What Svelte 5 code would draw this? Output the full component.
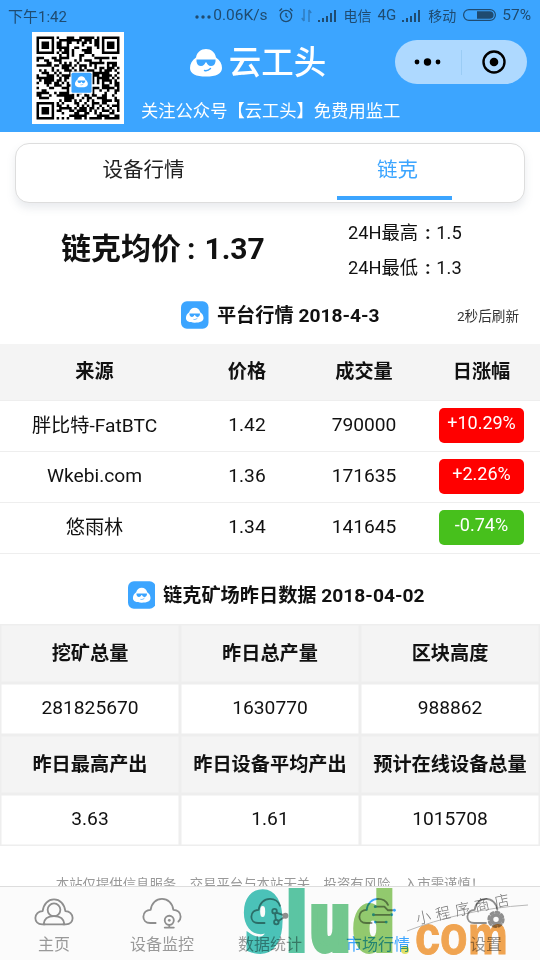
<script>
  const market = [
    { name: '胖比特-FatBTC', price: '1.42', volume: '790000', change: '+10.29%', up: true },
    { name: 'Wkebi.com', price: '1.36', volume: '171635', change: '+2.26%', up: true },
    { name: '悠雨林', price: '1.34', volume: '141645', change: '-0.74%', up: false }
  ];
  const stats = [
    { head: true, cells: ['挖矿总量', '昨日总产量', '区块高度'] },
    { head: false, cells: ['281825670', '1630770', '988862'] },
    { head: true, cells: ['昨日最高产出', '昨日设备平均产出', '预计在线设备总量'] },
    { head: false, cells: ['3.63', '1.61', '1015708'] }
  ];

  const N = 33;
  function finder(x, y) {
    return `M${x} ${y}h7v7h-7zM${x + 1} ${y + 1}v5h5v-5zM${x + 2} ${y + 2}h3v3h-3z`;
  }
  function makeQr() {
    let seed = 20180403;
    const rnd = () => ((seed = (seed * 1664525 + 1013904223) >>> 0) / 4294967296);
    let d = finder(0, 0) + finder(N - 7, 0) + finder(0, N - 7);
    for (let y = 0; y < N; y++) {
      for (let x = 0; x < N; x++) {
        const inTL = x < 8 && y < 8;
        const inTR = x >= N - 8 && y < 8;
        const inBL = x < 8 && y >= N - 8;
        if (inTL || inTR || inBL) continue;
        if (rnd() < 0.52) d += `M${x} ${y}h1v1h-1z`;
      }
    }
    return d;
  }
  const qr = makeQr();
</script>

{#snippet face(bg)}
  <path fill="#fff" d="M16 0C21 0 25 3 26 8.500C30 11 32 15 32 19C32 25 26 27.500 16 27.500C6 27.500 0 25 0 19C0 15 2 11 6 8.500C7 3 11 0 16 0Z" />
  <path fill={bg} d="M7 10.500H25.500V12.500C25 15.500 23.500 17 21 17C18.500 17 17 15 16.700 13.500H15.300C15 15 13.500 17 11 17C8.500 17 7 15.500 6.500 12.500V10.500Z" />
  <path fill="none" stroke={bg} stroke-width="1.400" stroke-linecap="round" d="M14.500 21.500C16.500 22 19 21 20.500 19.500" />
{/snippet}

{#snippet badge()}
  <svg class="badge" viewBox="0 0 28 28">
    <rect width="28" height="28" rx="6" fill="#3ca5ff" />
    <g transform="translate(5 6.500) scale(.56)">{@render face('#3ca5ff')}</g>
  </svg>
{/snippet}

<div class="page">
  <header class="top">
    <div class="status">
      <span class="time">下午1:42</span>
      <span class="status-right">
        <svg class="dots" viewBox="0 0 16 4"><circle cx="2" cy="2" r="1.700" /><circle cx="8" cy="2" r="1.700" /><circle cx="14" cy="2" r="1.700" /></svg>
        <span class="speed">0.06K/s</span>
        <svg class="alarm" viewBox="0 0 16 16"><circle cx="8" cy="9" r="5.600" /><path d="M8 6v3.200l2 1.300M1.500 4L4 1.500M14.500 4L12 1.500" /></svg>
        <svg class="arrows" viewBox="0 0 11 15"><path d="M3 1v12M3 13l-2.200-3M8 14V2M8 2l2.200 3" /></svg>
        <svg class="signal" viewBox="0 0 19 13"><path d="M0 11h2v2H0zM4 9h2v4H4zM8 7h2v6H8zM12 4h2v9h-2zM16 1h2v12h-2z" /></svg>
        <span class="carrier">电信</span>
        <span class="net">4G</span>
        <svg class="signal" viewBox="0 0 19 13"><path d="M0 11h2v2H0zM4 9h2v4H4zM8 7h2v6H8zM12 4h2v9h-2zM16 1h2v12h-2z" /></svg>
        <span class="carrier">移动</span>
        <svg class="battery" viewBox="0 0 33 12"><rect x=".6" y=".6" width="31.800" height="10.800" rx="5.400" /><path class="fill" d="M14 2.200h12.800a3.800 3.800 0 0 1 0 7.600H14z" /></svg>
        <span class="pct">57%</span>
      </span>
    </div>
    <div class="brand">
      <svg class="qr" viewBox="-1.800 -1.800 36.600 36.600">
        <rect x="-1.800" y="-1.800" width="36.600" height="36.600" fill="#fff" />
        <path d={qr} fill="#000" fill-rule="evenodd" />
        <rect x="13.500" y="14" width="8.800" height="8.800" fill="#fff" />
        <rect x="13.900" y="14.400" width="8" height="8" rx=".6" fill="#3ca5ff" />
        <g transform="translate(15.300 15.800) scale(.16)">{@render face('#3ca5ff')}</g>
      </svg>
      <div class="brand-main">
        <div class="title-row">
          <svg class="logo" viewBox="0 0 32 28">{@render face('#3ca5ff')}</svg>
          <span class="title">云工头</span>
        </div>
        <div class="sub">关注公众号【云工头】免费用监工</div>
      </div>
      <div class="capsule">
        <span class="cap-side">
          <svg class="cap-dots" viewBox="0 0 27 10"><circle cx="3" cy="5" r="2.400" /><circle cx="13.500" cy="5" r="3.700" /><circle cx="24" cy="5" r="2.400" /></svg>
        </span>
        <span class="cap-line"></span>
        <span class="cap-side">
          <svg class="cap-target" viewBox="0 0 24 24"><circle class="ring" cx="12" cy="12" r="10.500" /><circle cx="12" cy="12" r="4.300" /></svg>
        </span>
      </div>
    </div>
  </header>

  <main class="content">
    <div class="tabs">
      <div class="tab">设备行情</div>
      <div class="tab active">链克<i></i></div>
    </div>

    <div class="price-row">
      <div class="avg">链克均价<span class="colon">:</span>1.37</div>
      <div class="hilo">
        <div>24H最高<span class="colon">:</span>1.5</div>
        <div>24H最低<span class="colon">:</span>1.3</div>
      </div>
    </div>

    <div class="sec-one">
      <div class="sec-title">{@render badge()}<span>平台行情 2018-4-3</span></div>
      <span class="refresh">2秒后刷新</span>
    </div>

    <div class="market">
      <div class="m-row m-head">
        <span>来源</span><span>价格</span><span>成交量</span><span>日涨幅</span>
      </div>
      {#each market as r}
        <div class="m-row">
          <span>{r.name}</span><span>{r.price}</span><span>{r.volume}</span>
          <span><b class="chg" class:down={!r.up}>{r.change}</b></span>
        </div>
      {/each}
    </div>

    <div class="sec-two">
      <div class="sec-title">{@render badge()}<span>链克矿场昨日数据 2018-04-02</span></div>
    </div>

    <div class="stats">
      {#each stats as row}
        {#each row.cells as c}
          <div class="cell" class:head={row.head}>{c}</div>
        {/each}
      {/each}
    </div>

    <p class="note">本站仅提供信息服务，交易平台与本站无关，投资有风险，入市需谨慎！</p>
  </main>

  <nav class="nav">
    <div class="nav-item">
      <svg viewBox="0 0 44 34"><path d="M12 29.500H9C4 29.500 1.500 26 1.500 22.500C1.500 18 5 15 9.500 15C10.500 7 15.500 2 22 2C28.500 2 33.500 7 34.500 15C39 15 42.500 18 42.500 22.500C42.500 26 40 29.500 35 29.500H32" /><circle cx="22" cy="13.500" r="7" /><path d="M10.500 29.500C11 24 15 20.500 22 20.500C29 20.500 33 24 33.500 29.500Z" /></svg>
      <span>主页</span>
    </div>
    <div class="nav-item">
      <svg viewBox="0 0 44 34"><path d="M15 28H9C4 28 1.500 24.500 1.500 21C1.500 16.500 5 13.500 9.500 13.500C10.500 6 15.500 1.500 22 1.500C28.500 1.500 33.500 6 34.500 13.500C39 13.500 42.500 16.500 42.500 21C42.500 23 41.500 25 40 26.500" /><circle cx="30" cy="25" r="5" /><circle class="solid" cx="30" cy="25" r="1.500" /><path d="M30 30v2.500M25 33h10" /></svg>
      <span>设备监控</span>
    </div>
    <div class="nav-item">
      <svg viewBox="0 0 44 34"><path d="M16 28H9C4 28 1.500 24.500 1.500 21C1.500 16.500 5 13.500 9.500 13.500C10.500 6 15.500 1.500 22 1.500C27 1.500 31.500 4.500 33 9" /><circle cx="27" cy="15" r="2.500" /><circle class="solid" cx="39" cy="20" r="3.200" /><circle cx="29" cy="27" r="2.500" /><path d="M29 16.500L36 19M37 22L31 26M27.500 17.500L28.500 24.500" /></svg>
      <span>数据统计</span>
    </div>
    <div class="nav-item active">
      <svg viewBox="0 0 44 34"><path class="grey" d="M15 28H9C4 28 1.500 24.500 1.500 21C1.500 16.500 5 13.500 9.500 13.500" /><path d="M9.500 13.500C10.500 6 15.500 1.500 22 1.500" /><path class="grey" d="M22 1.500C27 1.500 31 4 33 8M19 10h10l4 4h5M17 19h18M19 27h11" /><circle class="solid" cx="17" cy="19" r="1.600" /><circle class="solid" cx="19" cy="10" r="1.600" /><circle class="solid" cx="40" cy="14" r="1.600" /><circle class="solid" cx="37" cy="19" r="1.600" /><circle class="solid" cx="19" cy="27" r="1.600" /><circle class="solid" cx="31" cy="27" r="1.600" /></svg>
      <span>市场行情</span>
    </div>
    <div class="nav-item">
      <svg viewBox="0 0 44 34"><path d="M22 28H9C4 28 1.500 24.500 1.500 21C1.500 16.500 5 13.500 9.500 13.500C10.500 6 15.500 1.500 22 1.500C28.500 1.500 33.500 6 34.500 13.500" /><circle class="gear" cx="33" cy="24" r="5" /><circle class="gear-teeth" cx="33" cy="24" r="8" /></svg>
      <span>设置</span>
    </div>
  </nav>

  <div class="mark" aria-hidden="true">
    <span class="mark-big"><span class="m1">9</span><span class="m2">l</span><span class="m3">u</span><span class="m4">d</span></span>
    <span class="mark-dot"></span>
    <span class="mark-com">com</span>
    <svg class="mark-line" viewBox="0 0 125 28"><path d="M1 27C35 14 75 4 122 1" /></svg>
    <span class="mark-hand">小程序商店</span>
  </div>
</div>

<style>
  :global(body) {
    margin: 0;
    background: #fff;
  }
  .page {
    position: relative;
    display: flex;
    flex-direction: column;
    width: 540px;
    height: 960px;
    overflow: hidden;
    background: #fff;
    color: #111;
    font-family: Roboto, "Noto Sans CJK SC", sans-serif;
  }

  .top {
    flex: none;
    height: 132px;
    background: #3ca5ff;
    color: #fff;
  }
  .status {
    display: flex;
    justify-content: space-between;
    align-items: center;
    height: 30px;
    padding: 0 9px 0 8px;
    color: #1f4b70;
    font-size: 15px;
  }
  .status-right {
    display: flex;
    align-items: center;
  }
  .dots { width: 16px; height: 4px; margin: 3px 2px 0 0; fill: #1f4b70; }
  .speed { font-size: 15.500px; }
  .alarm { width: 16px; height: 16px; margin-left: 10px; fill: none; stroke: #1f4b70; stroke-width: 1.300; }
  .arrows { width: 11px; height: 15px; margin-left: 7px; fill: none; stroke: #2f7cc0; stroke-width: 1.500; }
  .signal { width: 19px; height: 13px; margin-left: 6px; fill: #1f4b70; }
  .carrier { font-size: 14px; margin-left: 7px; }
  .net { margin-left: 6px; font-size: 15px; }
  .battery { width: 33px; height: 12px; margin-left: 7px; fill: none; stroke: #1f4b70; stroke-width: 1.200; }
  .battery .fill { fill: #1f4b70; stroke: none; }
  .pct { margin-left: 6px; font-size: 15.500px; }

  .brand {
    display: flex;
    height: 102px;
    padding-left: 32px;
  }
  .qr { flex: none; width: 92px; height: 92px; margin-top: 2px; }
  .brand-main {
    flex: none;
    width: 271px;
  }
  .title-row {
    display: flex;
    justify-content: center;
    align-items: center;
    gap: 7px;
    height: 44px;
    margin-top: 11px;
    padding-right: 3px;
  }
  .logo { width: 32px; height: 28px; }
  .title { font-size: 32.500px; font-weight: 500; line-height: 44px; }
  .sub {
    margin-top: 13px;
    padding-left: 17px;
    font-size: 17.300px;
    line-height: 26px;
    white-space: nowrap;
  }
  .capsule {
    flex: none;
    display: flex;
    align-items: center;
    width: 132px;
    height: 44px;
    margin-top: 10px;
    border-radius: 22px;
    background: #aed9ff;
  }
  .cap-side { flex: 1; display: flex; justify-content: center; }
  .cap-line { width: 1px; height: 25px; background: #9accf5; }
  .cap-dots { width: 27px; height: 10px; fill: #000; }
  .cap-target { width: 24px; height: 24px; }
  .cap-target .ring { fill: none; stroke: #000; stroke-width: 2.400; }

  .content {
    flex: 1;
    min-height: 0;
    overflow: hidden;
  }
  .tabs {
    display: flex;
    box-sizing: border-box;
    height: 60px;
    margin: 11px 15px 0;
    border: 1px solid #ddd;
    border-radius: 14px;
    background: #fff;
    box-shadow: 0 5px 8px rgba(120, 130, 150, .16);
  }
  .tab {
    position: relative;
    flex: 1;
    text-align: center;
    font-size: 20.500px;
    line-height: 53px;
    color: #222;
  }
  .tab:first-child { flex: none; width: 255px; }
  .tab.active { color: #3ca5ff; }
  .tab i {
    position: absolute;
    left: 66px;
    bottom: 2px;
    width: 115px;
    height: 4px;
    background: #3ca5ff;
  }

  .price-row {
    display: flex;
    align-items: center;
    height: 73px;
    margin-top: 11px;
    padding-left: 61px;
  }
  .avg { width: 287px; margin-top: -9px; font-size: 30px; font-weight: 700; white-space: nowrap; }
  .avg .colon { margin: 0 9px 0 6px; }
  .hilo { margin-top: -1px; font-size: 18.300px; line-height: 35px; color: #111; white-space: nowrap; }
  .hilo .colon { margin: 0 6px 0 7px; font-weight: 700; }

  .sec-one {
    position: relative;
    display: flex;
    align-items: center;
    justify-content: center;
    height: 28px;
    margin-top: 14px;
    padding-left: 21px;
  }
  .refresh {
    position: absolute;
    right: 21px;
    top: 7px;
    font-size: 13.600px;
    line-height: 16px;
    color: #333;
  }
  .sec-title {
    display: flex;
    align-items: center;
    gap: 8px;
    font-size: 19.200px;
    font-weight: 700;
    white-space: nowrap;
  }
  .sec-title span { padding-bottom: 2px; }
  .badge { flex: none; width: 27.500px; height: 28px; }

  .market { margin-top: 15px; }
  .m-row {
    display: grid;
    grid-template-columns: 189px 116px 118px 117px;
    align-items: center;
    box-sizing: border-box;
    height: 51px;
    padding-bottom: 4px;
    border-bottom: 1px solid #eee;
    font-size: 19.200px;
    text-align: center;
    white-space: nowrap;
  }
  .m-row.m-head {
    height: 57px;
    background: #f4f4f4;
    font-weight: 700;
  }
  .chg {
    display: block;
    width: 85px;
    height: 35px;
    margin: 3px 16px 0;
    border-radius: 5px;
    background: #ff0000;
    color: #fff;
    font-weight: 400;
    font-size: 18px;
    line-height: 30px;
  }
  .chg.down { background: #47c01c; }

  .sec-two {
    display: flex;
    justify-content: center;
    margin-top: 27px;
    padding-left: 12px;
    height: 28px;
  }

  .stats {
    display: grid;
    grid-template-columns: 180px 180px 180px;
    margin-top: 15px;
  }
  .cell {
    display: flex;
    justify-content: center;
    align-items: center;
    box-sizing: border-box;
    height: 52px;
    padding-bottom: 3px;
    border: 1px solid #eee;
    box-shadow: inset 0 0 0 .500px #eee;
    font-size: 19.200px;
    white-space: nowrap;
  }
  .cell.head {
    height: 59px;
    padding-bottom: 4px;
    background: #f4f4f4;
    font-weight: 700;
  }

  .note {
    margin: 30px 0 0;
    text-align: center;
    font-size: 13.400px;
    line-height: 18px;
    color: #999;
    white-space: nowrap;
  }

  .nav {
    flex: none;
    display: grid;
    grid-template-columns: repeat(5, 108px);
    box-sizing: border-box;
    height: 74px;
    border-top: 1px solid #ddd;
    background: #fbfbfb;
  }
  .nav-item {
    display: flex;
    flex-direction: column;
    align-items: center;
    padding-top: 10px;
    color: #999;
    font-size: 16px;
    line-height: 24px;
  }
  .nav-item svg {
    width: 40px;
    height: 32px;
    margin-bottom: 4px;
    fill: none;
    stroke: #8e8e8e;
    stroke-width: 2;
    stroke-linecap: round;
    stroke-linejoin: round;
  }
  .nav-item .solid { fill: #8e8e8e; stroke: none; }
  .nav-item .gear-teeth { stroke-width: 3; stroke-dasharray: 3.200 3.080; }
  .nav-item .gear { stroke-width: 4; }
  .nav-item.active { color: #3ca5ff; }
  .nav-item.active svg { stroke: #3ca5ff; }
  .nav-item.active .solid { fill: #3ca5ff; }
  .nav-item.active .grey { stroke: #8e8e8e; }

  .mark {
    position: absolute;
    left: 240px;
    top: 885px;
    width: 300px;
    height: 75px;
    pointer-events: none;
    mix-blend-mode: multiply;
  }
  .mark-big {
    position: absolute;
    left: 4px;
    top: 3px;
    display: flex;
    gap: 5px;
    transform-origin: 0 0;
    transform: scaleX(.76);
    font-family: "DejaVu Sans", sans-serif;
    font-weight: 700;
    font-size: 74px;
    line-height: 70px;
    -webkit-text-stroke: 8px currentColor;
  }
  .m1 { color: #4cc5bb; }
  .m2 { color: #5cc8a6; }
  .m3 { color: #74ca90; }
  .m4 { color: #94cc70; }
  .mark-dot {
    position: absolute;
    left: 161px;
    top: 61px;
    width: 8px;
    height: 8px;
    border-radius: 50%;
    background: #e4e46a;
  }
  .mark-com {
    position: absolute;
    left: 175px;
    top: 30px;
    transform-origin: 0 0;
    transform: scaleX(.82);
    font-family: "Liberation Sans", sans-serif;
    font-weight: 700;
    font-size: 55px;
    line-height: 40px;
    -webkit-text-stroke: 1px #f4a752;
    color: #f4a752;
  }
  .mark-line {
    position: absolute;
    left: 166px;
    top: 19px;
    width: 125px;
    height: 28px;
    fill: none;
    stroke: #bbb;
    stroke-width: 1;
  }
  .mark-hand {
    position: absolute;
    left: 175px;
    top: 16px;
    transform: rotate(-12deg);
    font-size: 15px;
    line-height: 16px;
    letter-spacing: 5px;
    font-weight: 300;
    color: #777;
    white-space: nowrap;
  }
</style>
